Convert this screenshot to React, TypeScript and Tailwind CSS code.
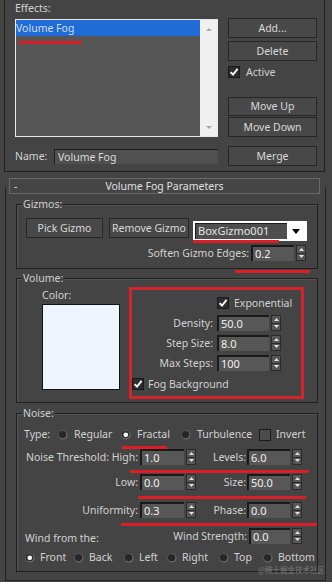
import React from "react";

function Button({ className = "", children }: { className?: string; children: React.ReactNode }) {
  return (
    <div
      className={
        "flex items-center justify-center bg-[#484848] border border-[#262626] text-[#d8d8d8] leading-[13px] shrink-0 " +
        className
      }
    >
      {children}
    </div>
  );
}

function Check({ on }: { on: boolean }) {
  return (
    <div
      className={
        "w-[12px] h-[12px] shrink-0 border border-[#1a1a1a] flex items-center justify-center " +
        (on ? "bg-[#2c2c2c]" : "bg-[#4c4c4c]")
      }
    >
      {on && (
        <svg width="10" height="10" viewBox="0 0 10 10">
          <path d="M1.6 5.1 L4 7.6 L8.6 1.9" stroke="#f4f4f4" strokeWidth="2" fill="none" />
        </svg>
      )}
    </div>
  );
}

function Radio({ on }: { on: boolean }) {
  return (
    <svg width="10" height="10" viewBox="0 0 10 10" className="shrink-0">
      <circle cx="5" cy="5" r="4.5" fill="#6a6a6a" />
      <circle cx="4.6" cy="4.6" r="3.7" fill="#262626" />
      {on && <circle cx="4.8" cy="4.8" r="2.4" fill="#f4f4f4" />}
    </svg>
  );
}

function Arrows() {
  return (
    <div className="ml-[2px] w-[10px] h-[16px] shrink-0 flex flex-col bg-[#565656] border border-[#2a2a2a]">
      <div className="flex-1 flex items-center justify-center border-b border-[#2a2a2a]">
        <svg width="5" height="3" viewBox="0 0 5 3">
          <path d="M0 3 L2.5 0 L5 3 Z" fill="#e2e2e2" />
        </svg>
      </div>
      <div className="flex-1 flex items-center justify-center">
        <svg width="5" height="3" viewBox="0 0 5 3">
          <path d="M0 0 L5 0 L2.5 3 Z" fill="#e2e2e2" />
        </svg>
      </div>
    </div>
  );
}

function Field({ value, className = "" }: { value: string; className?: string }) {
  return (
    <div
      className={
        "h-[16px] shrink-0 bg-[#575757] border-t-2 border-l-2 border-[#1a1a1a] text-[#f0f0f0] text-[11px] leading-[14px] pl-[2px] " +
        className
      }
    >
      {value}
    </div>
  );
}

function Group({ label, className = "", children }: { label: string; className?: string; children: React.ReactNode }) {
  return (
    <div className={"relative border border-[#1f1f1f] shadow-[inset_1px_1px_0_#555555] " + className}>
      <div className="absolute -top-[7px] left-[5px] px-[1px] bg-[#444444] leading-[13px] text-[#d0d0d0]">{label}</div>
      {children}
    </div>
  );
}

function RadioItem({ on, label, className = "" }: { on: boolean; label: string; className?: string }) {
  return (
    <div className={"flex items-center shrink-0 " + className}>
      <Radio on={on} />
      <span className="ml-[5px]">{label}</span>
    </div>
  );
}

export default function App() {
  return (
    <div className="relative w-[332px] h-[585px] bg-[#444444] flex flex-col overflow-hidden font-['Noto_Sans',sans-serif] text-[10.5px] text-[#d2d2d2] leading-[13px]">
      {/* Effects panel */}
      <div className="ml-[4px] w-[321px] h-[172px] shrink-0 border-x border-b border-[#222222] flex flex-col">
        <div className="ml-[10px] mt-[2px] h-[13px]">Effects:</div>
        <div className="flex mt-[3px] ml-[10px]">
          <div className="mt-[1px] w-[203px] h-[118px] border border-[#e8e8e8] bg-[#565656] flex">
            <div className="flex-1 flex flex-col">
              <div className="h-[16px] bg-[#1f6cd7] text-[#d4ddef] leading-[16px]">Volume Fog</div>
            </div>
            <div className="w-[17px] bg-[#f0f0f0] flex flex-col items-center justify-between pt-[8px] pb-[7px]">
              <svg width="6" height="3" viewBox="0 0 6 3">
                <path d="M0 3 L3 0 L6 3 Z" fill="#a8a8a8" />
              </svg>
              <svg width="6" height="3" viewBox="0 0 6 3">
                <path d="M0 0 L6 0 L3 3 Z" fill="#a8a8a8" />
              </svg>
            </div>
          </div>
          <div className="ml-[10px] w-[89px] flex flex-col">
            <Button className="h-[20px]">Add...</Button>
            <Button className="h-[20px] mt-[3px]">Delete</Button>
            <div className="flex items-center mt-[5px] h-[12px]">
              <Check on={true} />
              <span className="ml-[6px]">Active</span>
            </div>
            <Button className="h-[19px] mt-[19px]">Move Up</Button>
            <Button className="h-[20px] mt-[1px]">Move Down</Button>
          </div>
        </div>
        <div className="flex items-center h-[20px] mt-[9px] ml-[10px]">
          <span className="w-[39px] shrink-0">Name:</span>
          <div className="w-[164px] h-[15px] shrink-0 bg-[#505050] border-t border-l border-[#1c1c1c] pl-[3px] leading-[14px] text-[#dcdcdc]">
            Volume Fog
          </div>
          <Button className="ml-[10px] w-[89px] h-[20px]">Merge</Button>
        </div>
      </div>

      {/* Rollout header */}
      <div className="relative z-10 mt-[6px] ml-[9px] w-[311px] h-[16px] shrink-0 border border-[#6a6a6a] bg-[#454545] grid grid-cols-[20px_1fr_20px] items-center text-[#e0e0e0]">
        <span className="pl-[4px]">-</span>
        <span className="text-center">Volume Fog Parameters</span>
        <span />
      </div>

      {/* Rollout frame */}
      <div className="-mt-[7px] ml-[5px] w-[321px] shrink-0 border-x border-b border-[#222222] flex flex-col pb-[8px]">
        {/* Gizmos */}
        <Group label="Gizmos:" className="mt-[17px] ml-[10px] w-[302px] pt-[13px] pb-[7px]">
          <div className="flex items-start pl-[9px] h-[23px]">
            <Button className="w-[77px] h-[20px]">Pick Gizmo</Button>
            <Button className="ml-[6px] w-[80px] h-[20px]">Remove Gizmo</Button>
            <div className="ml-[4px] mt-[3px] w-[114px] h-[20px] bg-white p-[2px] flex">
              <div className="w-[92px] h-full bg-[#4e4e4e] border-t border-l border-[#1c1c1c] pl-[2px] leading-[14px] text-[#e6e6e6] text-[11px]">
                BoxGizmo001
              </div>
              <div className="flex-1 flex items-center justify-center">
                <svg width="8" height="5" viewBox="0 0 8 5">
                  <path d="M0 0 L8 0 L4 5 Z" fill="#000" />
                </svg>
              </div>
            </div>
          </div>
          <div className="flex items-center justify-end pr-[11px] mt-[4px] h-[16px]">
            <span className="mr-[2px]">Soften Gizmo Edges:</span>
            <Field value="0.2" className="w-[43px]" />
            <Arrows />
          </div>
        </Group>

        {/* Volume */}
        <Group label="Volume:" className="mt-[9px] ml-[10px] w-[302px] pb-[3px]">
          <div className="flex items-start">
            <div className="ml-[25px] mt-[10px] flex flex-col">
              <span className="h-[13px]">Color:</span>
              <div className="mt-[2px] w-[78px] h-[86px] bg-[#eff5ff] border border-[#111111]" />
            </div>
            <div className="ml-[9px] mt-[8px] w-[175px] h-[112px] border-[3px] border-[#d4232b] flex flex-col">
              <div className="flex items-center mt-[7px] pl-[85px] h-[12px]">
                <Check on={true} />
                <span className="ml-[5px]">Exponential</span>
              </div>
              {[
                ["Density:", "50.0", "mt-[6px]"],
                ["Step Size:", "8.0", "mt-[4px]"],
                ["Max Steps:", "100", "mt-[4px]"],
              ].map(([l, v, m]) => (
                <div key={l} className={"flex items-center h-[16px] " + m}>
                  <span className="w-[81px] text-right">{l}</span>
                  <Field value={v} className="ml-[4px] w-[52px]" />
                  <Arrows />
                </div>
              ))}
              <div className="flex items-center mt-[7px] h-[12px]">
                <Check on={true} />
                <span className="ml-[4px]">Fog Background</span>
              </div>
            </div>
          </div>
        </Group>

        {/* Noise */}
        <Group label="Noise:" className="mt-[10px] ml-[10px] w-[302px] pt-[14px] pb-[7px]">
          <div className="flex items-center h-[13px] pl-[7px]">
            <span className="w-[34px] shrink-0">Type:</span>
            <Radio on={false} />
            <span className="ml-[6px] w-[47px] shrink-0">Regular</span>
            <Radio on={true} />
            <span className="ml-[6px] w-[44px] shrink-0">Fractal</span>
            <Radio on={false} />
            <span className="ml-[6px] w-[62px] shrink-0">Turbulence</span>
            <Check on={false} />
            <span className="ml-[5px]">Invert</span>
          </div>

          <div className="flex items-center h-[16px] mt-[8px]">
            <div className="w-[121px] shrink-0 pl-[9px] flex justify-between">
              <span>Noise Threshold:</span>
              <span>High:</span>
            </div>
            <Field value="1.0" className="ml-[2px] w-[44px]" />
            <Arrows />
            <span className="w-[50px] text-right">Levels:</span>
            <Field value="6.0" className="ml-[1px] w-[43px]" />
            <Arrows />
          </div>

          <div className="flex items-center h-[16px] mt-[9px]">
            <span className="w-[121px] shrink-0 text-right">Low:</span>
            <Field value="0.0" className="ml-[2px] w-[44px]" />
            <Arrows />
            <span className="w-[50px] text-right">Size:</span>
            <Field value="50.0" className="ml-[1px] w-[43px]" />
            <Arrows />
          </div>

          <div className="flex items-center h-[16px] mt-[12px]">
            <span className="w-[121px] shrink-0 text-right">Uniformity:</span>
            <Field value="0.3" className="ml-[2px] w-[44px]" />
            <Arrows />
            <span className="w-[50px] text-right">Phase:</span>
            <Field value="0.0" className="ml-[1px] w-[43px]" />
            <Arrows />
          </div>

          <div className="flex items-start h-[16px] mt-[10px]">
            <span className="w-[110px] shrink-0 pl-[8px] mt-[4px]">Wind from the:</span>
            <span className="w-[120px] shrink-0 text-right leading-[16px]">Wind Strength:</span>
            <Field value="0.0" className="ml-[2px] w-[41px]" />
            <Arrows />
          </div>

          <div className="flex items-center h-[13px] mt-[7px] pl-[8px]">
            <RadioItem on={true} label="Front" className="w-[49px]" />
            <RadioItem on={false} label="Back" className="w-[50px]" />
            <RadioItem on={false} label="Left" className="w-[43px]" />
            <RadioItem on={false} label="Right" className="w-[52px]" />
            <RadioItem on={false} label="Top" className="w-[44px]" />
            <RadioItem on={false} label="Bottom" />
          </div>
        </Group>
      </div>
      <div className="mt-[1px] flex-1 bg-white" />

      {/* red annotation marks */}
      <div className="absolute left-[19px] top-[41px] w-[63px] h-[3px] bg-[#dc1f27]" />
      <div className="absolute left-[193px] top-[240px] w-[86px] h-[3px] bg-[#dc1f27]" />
      <div className="absolute left-[235px] top-[270px] w-[75px] h-[3px] bg-[#dc1f27]" />
      <div className="absolute left-[122px] top-[446px] w-[45px] h-[3px] bg-[#dc1f27]" />
      <div className="absolute left-[130px] top-[470px] w-[179px] h-[3px] bg-[#dc1f27]" />
      <div className="absolute left-[138px] top-[496px] w-[168px] h-[3px] bg-[#dc1f27]" />
      <div className="absolute left-[121px] top-[523px] w-[196px] h-[3px] bg-[#dc1f27]" />

      {/* watermark */}
      <div className="absolute left-[258px] top-[565px] text-[7.5px] leading-[10px] text-[#7a7a7a] font-['Noto_Sans_CJK_SC',sans-serif]">
        @稀土掘金技术社区
      </div>
    </div>
  );
}
